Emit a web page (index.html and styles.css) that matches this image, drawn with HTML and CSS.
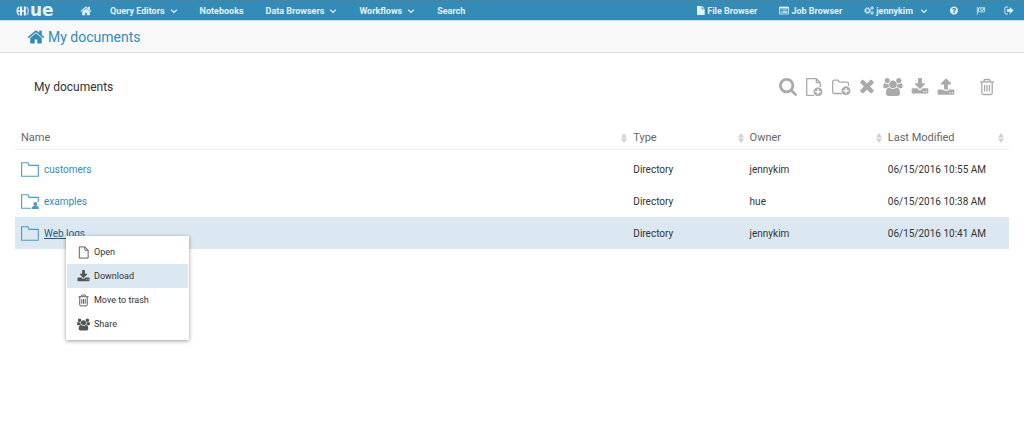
FILE: index.html
```html
<!DOCTYPE html>
<html lang="en">
<head>
<meta charset="utf-8">
<title>Hue - My documents</title>
<link rel="stylesheet" href="styles.css">
</head>
<body>
<svg class="sprite" aria-hidden="true">
  <symbol id="home" viewBox="0 0 1792 1792"><path d="M1472 992v480q0 26-19 45t-45 19h-384v-384h-256v384h-384q-26 0-45-19t-19-45v-480q0-1 .5-3t.5-3l575-474 575 474q1 2 1 6zm223-69l-62 74q-8 9-21 11h-3q-13 0-21-7l-692-577-692 577q-12 8-24 7-13-2-21-11l-62-74q-8-10-7-23.5t11-21.5l719-599q32-26 76-26t76 26l244 204v-195q0-14 9-23t23-9h192q14 0 23 9t9 23v408l219 182q10 8 11 21.5t-7 23.5z"/></symbol>
  <symbol id="chevron" viewBox="0 0 8 8"><path d="M1.2 2.8 4 5.4l2.8-2.6" fill="none" stroke="currentColor" stroke-width="1.3"/></symbol>
  <symbol id="search" viewBox="64 128 1664 1664"><path d="M1216 832q0-185-131.500-316.500t-316.500-131.500-316.500 131.500-131.500 316.500 131.500 316.500 316.500 131.500 316.500-131.500 131.500-316.500zm512 832q0 52-38 90t-90 38q-54 0-90-38l-343-342q-179 124-399 124-143 0-273.500-55.500t-225-150-150-225-55.500-273.500 55.500-273.500 150-225 225-150 273.500-55.500 273.500 55.500 225 150 150 225 55.500 273.500q0 220-124 399l343 343q37 37 37 90z"/></symbol>
  <symbol id="download" viewBox="0 0 1792 1792"><path d="M1344 1344q0-26-19-45t-45-19-45 19-19 45 19 45 45 19 45-19 19-45zm256 0q0-26-19-45t-45-19-45 19-19 45 19 45 45 19 45-19 19-45zm128-224v320q0 40-28 68t-68 28h-1472q-40 0-68-28t-28-68v-320q0-40 28-68t68-28h465l135 136q58 56 136 56t136-56l136-136h464q40 0 68 28t28 68zm-325-569q17 41-14 70l-448 448q-18 19-45 19t-45-19l-448-448q-31-29-14-70 17-39 59-39h256v-448q0-26 19-45t45-19h256q26 0 45 19t19 45v448h256q42 0 59 39z"/></symbol>
  <symbol id="upload" viewBox="0 0 1792 1792"><path d="M1344 1472q0-26-19-45t-45-19-45 19-19 45 19 45 45 19 45-19 19-45zm256 0q0-26-19-45t-45-19-45 19-19 45 19 45 45 19 45-19 19-45zm128-224v320q0 40-28 68t-68 28h-1472q-40 0-68-28t-28-68v-320q0-40 28-68t68-28h427q21 56 70.500 92t110.500 36h256q61 0 110.500-36t70.500-92h427q40 0 68 28t28 68zm-325-648q-17 40-59 40h-256v448q0 26-19 45t-45 19h-256q-26 0-45-19t-19-45v-448h-256q-42 0-59-40-17-39 14-69l448-448q18-19 45-19t45 19l448 448q31 30 14 69z"/></symbol>
  <symbol id="times" viewBox="200 300 1400 1400"><path d="M1490 1322q0 40-28 68l-136 136q-28 28-68 28t-68-28l-294-294-294 294q-28 28-68 28t-68-28l-136-136q-28-28-28-68t28-68l294-294-294-294q-28-28-28-68t28-68l136-136q28-28 68-28t68 28l294 294 294-294q28-28 68-28t68 28l136 136q28 28 28 68t-28 68l-294 294 294 294q28 28 28 68z"/></symbol>
  <symbol id="users" viewBox="-64 0 1920 1792"><path d="M529 896q-162 5-265 128h-134q-82 0-138-40.500t-56-118.500q0-353 124-353 6 0 43.500 21t97.500 42.500 119 21.500q67 0 133-23-5 37-5 66 0 139 81 256zm1071 637q0 120-73 189.500t-194 69.500h-874q-121 0-194-69.500t-73-189.500q0-53 3.500-103.500t14-109 26.500-108.500 43-97.500 62-81 85.500-53.500 111.500-20q10 0 43 21.500t73 48 107 48 135 21.500 135-21.500 107-48 73-48 43-21.500q61 0 111.500 20t85.500 53.500 62 81 43 97.500 26.500 108.500 14 109 3.500 103.500zm-1024-1277q0 106-75 181t-181 75-181-75-75-181 75-181 181-75 181 75 75 181zm704 384q0 159-112.500 271.500t-271.500 112.500-271.500-112.500-112.500-271.500 112.500-271.500 271.500-112.500 271.500 112.500 112.500 271.500zm576 225q0 78-56 118.500t-138 40.500h-134q-103-123-265-128 81-117 81-256 0-29-5-66 66 23 133 23 59 0 119-21.500t97.500-42.500 43.500-21q124 0 124 353zm-128-609q0 106-75 181t-181 75-181-75-75-181 75-181 181-75 181 75 75 181z"/></symbol>
  <symbol id="help" viewBox="128 128 1536 1536"><path d="M1024 1376v-192q0-14-9-23t-23-9h-192q-14 0-23 9t-9 23v192q0 14 9 23t23 9h192q14 0 23-9t9-23zm256-672q0-88-55.500-163t-138.500-116-170-41q-243 0-371 213-15 24 8 42l132 100q7 6 19 6 16 0 25-12 53-68 86-92 34-24 86-24 48 0 85.500 26t37.500 59q0 38-20 61t-68 45q-63 28-115.500 86.500t-52.500 125.500v36q0 14 9 23t23 9h192q14 0 23-9t9-23q0-19 21.500-49.500t54.500-49.500q32-18 49-28.500t46-35 44.500-48 28-60.500 12.500-81zm384 192q0 209-103 385.500t-279.500 279.500-385.500 103-385.500-103-279.500-279.500-103-385.500 103-385.500 279.500-279.500 385.500-103 385.500 103 279.500 279.500 103 385.500z"/></symbol>
  <symbol id="file-solid" viewBox="0 0 8 9"><path d="M.5 0h4.200v3.200h3V8.500a.5.500 0 0 1-.5.500H.5a.5.500 0 0 1-.5-.5V.5A.5.500 0 0 1 .5 0zM5.300 0 7.700 2.600H5.300z"/></symbol>
  <symbol id="list" viewBox="0 0 10 8"><path d="M.5.5h9v7h-9z" fill="none" stroke="currentColor" stroke-width=".8"/><path d="M.5.500h9v1.500h-9zM1.600 3h1v.8h-1zM3.400 3h5v.8h-5zM1.600 4.400h1v.8h-1zM3.400 4.400h5v.8h-5zM1.600 5.800h1v.8h-1zM3.400 5.800h5v.8h-5z"/></symbol>
  <symbol id="cogs" viewBox="0 0 20 18"><g fill="none" stroke="currentColor"><circle cx="7" cy="9" r="4" stroke-width="2.400"/><circle cx="7" cy="9" r="5.800" stroke-width="2" stroke-dasharray="2.300 2.250"/><circle cx="16" cy="4" r="2" stroke-width="1.600"/><circle cx="16" cy="4" r="3.200" stroke-width="1.200" stroke-dasharray="1.600 1.750"/><circle cx="16" cy="14" r="2" stroke-width="1.600"/><circle cx="16" cy="14" r="3.200" stroke-width="1.200" stroke-dasharray="1.600 1.750"/></g></symbol>
  <symbol id="flag" viewBox="0 0 10 10"><path d="M.9 1v8.500M2.200 2.200c2-1.200 3.400.8 6.800-.5v4.500c-3.300 1.500-4.600-.7-6.800.5z" fill="none" stroke="currentColor" stroke-width=".9"/><path d="M3.600 2.400 5.200 2.700v1.500l-1.600-.3zM5.200 4.200l1.800.2v1.500l-1.800-.3zM7 2.900l1.500-.3v1.500L7 4.400z"/></symbol>
  <symbol id="logout" viewBox="0 0 10 9"><path d="M4 1H2Q.8 1 .8 2.200v4.400Q.8 8 2 8h2" fill="none" stroke="currentColor" stroke-width=".9"/><path d="M3 3.200h2.800V1.100L9.600 4.500 5.800 7.900V5.800H3z"/></symbol>
  <symbol id="file" viewBox="0 0 13 14"><path d="M2 1h6l3.500 3.500v8.500h-9.500zM8 1v3.500h3.500" fill="none" stroke="currentColor" stroke-linejoin="round"/></symbol>
  <symbol id="file-plus" viewBox="0 0 18 20"><path d="M9 18.300H1.700V1.700h9.600l4 4V10M11.300 1.700v4h4" fill="none" stroke="currentColor" stroke-width="1.300" stroke-linejoin="round"/><path fill-rule="evenodd" d="M13 10.300a4.400 4.400 0 1 0 .01 0zM12.300 12h1.400v2h2v1.400h-2v2h-1.400v-2h-2v-1.400h2z"/></symbol>
  <symbol id="folder-plus" viewBox="0 0 20 20"><path d="M11 16.500H3.200Q1.700 16.500 1.700 15V4.700Q1.700 3.200 3.200 3.200H7L8.500 5.200H16q1.500 0 1.500 1.500V9" fill="none" stroke="currentColor" stroke-width="1.300"/><path fill-rule="evenodd" d="M15 9.300a4.400 4.400 0 1 0 .01 0zM14.300 11h1.400v2h2v1.400h-2v2h-1.400v-2h-2V13h2z"/></symbol>
  <symbol id="trash" viewBox="0 0 16 18"><path d="M1 3.800h14M5 3.500V2.700Q5 1.500 6.200 1.500h3.600Q11 1.500 11 2.700v.8M2.800 4v11q0 1.500 1.500 1.500h7.400q1.500 0 1.500-1.500V4M5.600 7v6.500M8 7v6.500M10.400 7v6.500" fill="none" stroke="currentColor" stroke-width="1.300"/></symbol>
  <symbol id="folder" viewBox="0 0 18 15"><path d="M.6 14.200V.8H7l1 2.600h9.300v10.800z" fill="none" stroke="currentColor" stroke-width="1.100"/></symbol>
  <symbol id="folder-user" viewBox="0 0 18 15"><path d="M10 14.200H.6V.8H7l1 2.600h9.300V8" fill="none" stroke="currentColor" stroke-width="1.100"/><circle cx="14.300" cy="10" r="2"/><path d="M11 15v-1.300q0-1.700 1.700-1.700h3.300q1.700 0 1.700 1.700V15z"/></symbol>
  <symbol id="sort" viewBox="0 0 6 10"><path d="M0 4.400 3 0l3 4.400zM0 5.600h6L3 10z"/></symbol>
</svg>

<header class="navbar">
  <a class="brand" href="#" aria-label="Hue">
    <svg class="brand-mark" viewBox="0 0 14 10"><path d="M3.200 1Q1.200 2 1.200 5t2 4M2 5h6" fill="none" stroke="#dcebf4" stroke-width="1.600"/><path d="M5 .5v9M8.800.5v9" fill="none" stroke="#fff" stroke-width="1.900"/><path d="M10.800 1q3 4 0 8" fill="none" stroke="#c3b1ee" stroke-width="1.700"/></svg>
    <span>ue</span>
  </a>
  <nav class="nav-main">
    <a href="#" aria-label="Home"><svg class="nav-home"><use href="#home"/></svg></a>
    <a href="#">Query Editors <svg class="caret"><use href="#chevron"/></svg></a>
    <a href="#">Notebooks</a>
    <a href="#">Data Browsers <svg class="caret"><use href="#chevron"/></svg></a>
    <a href="#">Workflows <svg class="caret"><use href="#chevron"/></svg></a>
    <a href="#">Search</a>
  </nav>
  <nav class="nav-side">
    <a href="#"><svg class="i-file"><use href="#file-solid"/></svg>File Browser</a>
    <a href="#"><svg class="i-small"><use href="#list"/></svg>Job Browser</a>
    <a href="#"><svg class="i-small"><use href="#cogs"/></svg>jennykim <svg class="caret"><use href="#chevron"/></svg></a>
    <a class="icon-link" href="#" aria-label="Help"><svg class="i-file"><use href="#help"/></svg></a>
    <a class="icon-link" href="#" aria-label="Tours"><svg class="i-small"><use href="#flag"/></svg></a>
    <a class="icon-link" href="#" aria-label="Sign out"><svg class="i-small"><use href="#logout"/></svg></a>
  </nav>
</header>

<div class="subbar">
  <a href="#"><svg><use href="#home"/></svg>My documents</a>
</div>

<main>
  <div class="toolbar">
    <h1>My documents</h1>
    <div class="actions">
      <button aria-label="Search"><svg class="w18"><use href="#search"/></svg></button>
      <button aria-label="New document"><svg class="w18 tall"><use href="#file-plus"/></svg></button>
      <button aria-label="New folder"><svg class="w20 tall"><use href="#folder-plus"/></svg></button>
      <button aria-label="Remove"><svg class="w16"><use href="#times"/></svg></button>
      <button aria-label="Share"><svg class="w20"><use href="#users"/></svg></button>
      <button aria-label="Download"><svg class="w18"><use href="#download"/></svg></button>
      <button aria-label="Upload"><svg class="w18"><use href="#upload"/></svg></button>
      <button class="trash" aria-label="Trash"><svg class="w16"><use href="#trash"/></svg></button>
    </div>
  </div>

  <table>
    <thead>
      <tr>
        <th class="c-name"><div>Name<svg><use href="#sort"/></svg></div></th>
        <th class="c-type"><div>Type<svg><use href="#sort"/></svg></div></th>
        <th class="c-owner"><div>Owner<svg><use href="#sort"/></svg></div></th>
        <th class="c-date"><div>Last Modified<svg><use href="#sort"/></svg></div></th>
      </tr>
    </thead>
    <tbody>
      <tr><td><div class="entry"><svg><use href="#folder"/></svg><a href="#">customers</a></div></td><td>Directory</td><td>jennykim</td><td>06/15/2016 10:55 AM</td></tr>
      <tr><td><div class="entry"><svg><use href="#folder-user"/></svg><a href="#">examples</a></div></td><td>Directory</td><td>hue</td><td>06/15/2016 10:38 AM</td></tr>
      <tr class="selected">
        <td>
          <div class="entry"><svg><use href="#folder"/></svg><a href="#">Web logs</a>
            <div class="menu">
              <button><svg><use href="#file"/></svg>Open</button>
              <button class="active"><svg><use href="#download"/></svg>Download</button>
              <button><svg><use href="#trash"/></svg>Move to trash</button>
              <button><svg><use href="#users"/></svg>Share</button>
            </div>
          </div>
        </td>
        <td>Directory</td><td>jennykim</td><td>06/15/2016 10:41 AM</td>
      </tr>
    </tbody>
  </table>
</main>
</body>
</html>
```
FILE: styles.css
```css
* { box-sizing: border-box; }

body {
  min-height: 100vh;
  margin: 0;
  background: #fff;
  color: #333;
  font: 10px/16px Roboto, sans-serif;
}

a { color: #338bb8; text-decoration: none; }
svg { display: block; flex: none; fill: currentColor; }
button { border: 0; background: none; font: inherit; cursor: pointer; }
.sprite { position: absolute; width: 0; height: 0; }

.navbar {
  display: flex;
  align-items: center;
  height: 21px;
  padding: 0 10px 0 16px;
  background: #338bb8;
  border-top: 1px solid #4d859f;
  border-bottom: 1px solid #c5dfec;
  font-size: 9px;
  font-weight: 700;
}
.navbar a { display: flex; align-items: center; color: #e3f1f8; white-space: nowrap; }
.navbar .brand { width: 64px; padding-top: 1px; font: 700 17px/16px "DejaVu Sans", sans-serif; }
.brand span { padding-bottom: 2px; }
.brand-mark { width: 14px; height: 10px; }
.nav-main, .nav-side { display: flex; align-items: center; }
.nav-main { gap: 22px; }
.nav-main a:first-child { margin-right: -4px; }
.nav-side { gap: 18px; margin-left: auto; }
.nav-home { width: 12px; height: 12px; }
.caret { width: 8px; height: 8px; margin-left: 5px; }
.i-file { width: 8px; height: 9px; }
.i-small { width: 10px; height: 9px; }
.nav-side a { gap: 2px; padding-right: 4px; }
.nav-side .icon-link { padding-right: 0; }

.subbar {
  display: flex;
  align-items: center;
  height: 32px;
  padding: 0 27px;
  background: #f9f9f9;
  border-bottom: 1px solid #e1e1e1;
}
.subbar a { display: flex; align-items: center; gap: 3px; font-size: 14px; }
.subbar svg { width: 18px; height: 18px; }

main { padding: 20px 15px; }

.toolbar {
  display: flex;
  align-items: center;
  justify-content: space-between;
  height: 28px;
  padding: 0 10px 0 19px;
}
h1 { margin: 0; font-size: 12px; font-weight: 400; }
.actions { display: flex; align-items: center; color: #aaa; }
.actions button { padding: 0 4px; color: inherit; }
.actions .trash { margin-left: 16px; }
.w16 { width: 16px; height: 18px; }
.w18 { width: 18px; height: 18px; }
.w20 { width: 20px; height: 18px; }
.tall { height: 20px; }

table {
  width: 100%;
  margin-top: 24px;
  border-collapse: separate;
  border-spacing: 0;
  table-layout: fixed;
}
.c-name { width: 61.6%; }
.c-type { width: 11.7%; }
.c-owner { width: 13.9%; }
.c-date { width: 12.8%; }
th {
  height: 25px;
  padding: 2px 0 0 6px;
  border-bottom: 1px solid #eee;
  color: #666;
  font-size: 11px;
  font-weight: 400;
  text-align: left;
}
th div { display: flex; align-items: center; justify-content: space-between; }
th svg { width: 6px; height: 10px; color: #d0d0d0; }
.c-date svg { margin-right: 5px; }
tbody::before { content: ""; display: table-row; height: 3px; }
td { height: 32px; padding: 2px 0 0 6px; white-space: nowrap; }
.entry { position: relative; display: flex; align-items: flex-start; gap: 5px; }
.entry > svg { width: 18px; height: 15px; color: #4c9bc4; }
.selected td { background: #dbe8f1; }
.selected .entry > a { color: #1f5d80; text-decoration: underline; }

.menu {
  position: absolute;
  top: 10px;
  left: 45px;
  width: 123px;
  padding: 4px 1px;
  background: #fff;
  box-shadow: 0 1px 4px rgba(0, 0, 0, .4);
}
.menu button {
  display: flex;
  align-items: center;
  gap: 4px;
  width: 100%;
  height: 24px;
  padding: 0 10px;
  color: #333;
  font-size: 9px;
  text-align: left;
}
.menu svg { width: 13px; height: 13px; color: #555; }
.menu .active { background: #dbe8f1; }
```
